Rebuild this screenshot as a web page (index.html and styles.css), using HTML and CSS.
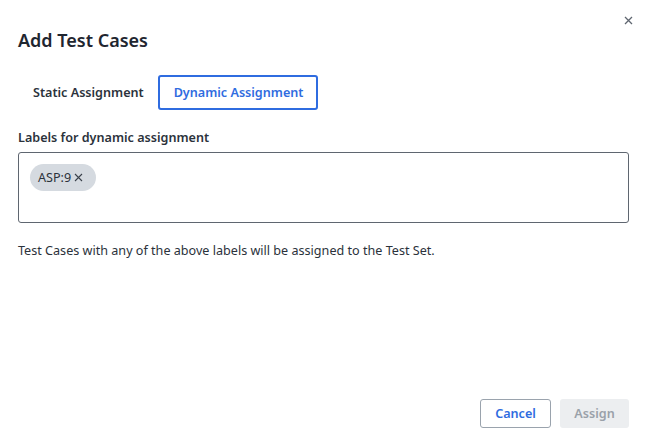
FILE: index.html
```html
<!DOCTYPE html>
<html>
<head>
<meta charset="utf-8">
<link rel="stylesheet" href="styles.css">
</head>
<body>
<div class="dialog">
  <button class="close" aria-label="Close">
    <svg width="9" height="9" viewBox="0 0 9 9"><path d="M1 1L8 8M8 1L1 8" stroke="#5f6670" stroke-width="1.3" fill="none"/></svg>
  </button>
  <h1 class="title">Add Test Cases</h1>
  <div class="tabs">
    <div class="tab">Static Assignment</div>
    <div class="tab active">Dynamic Assignment</div>
  </div>
  <div class="field-label">Labels for dynamic assignment</div>
  <div class="input">
    <span class="chip">ASP:9<svg class="chip-x" width="9" height="9" viewBox="0 0 9 9"><path d="M1 1L8 8M8 1L1 8" stroke="#3a414a" stroke-width="1.1" fill="none"/></svg></span>
  </div>
  <p class="help">Test Cases with any of the above labels will be assigned to the Test Set.</p>
  <div class="spacer"></div>
  <div class="footer">
    <button class="btn cancel">Cancel</button>
    <button class="btn assign">Assign</button>
  </div>
</div>
</body>
</html>
```
FILE: styles.css
```css
html, body {
  margin: 0;
  padding: 0;
  background: #ffffff;
}
body {
  font-family: "Noto Sans", "Open Sans", sans-serif;
  color: #1f2937;
}
.dialog {
  position: relative;
  width: 645px;
  height: 443px;
  box-sizing: border-box;
  padding: 28px 16px 15px 18px;
  display: flex;
  flex-direction: column;
}
.close {
  position: absolute;
  top: 13px;
  right: 10px;
  width: 14px;
  height: 14px;
  padding: 0;
  border: none;
  background: none;
  display: flex;
  align-items: center;
  justify-content: center;
}
.title {
  margin: 0;
  font-size: 18px;
  font-weight: 600;
  line-height: 24px;
  color: #1f2630;
}
.tabs {
  display: flex;
  margin-top: 23px;
}
.tab {
  height: 35px;
  box-sizing: border-box;
  padding: 0 14px 0 15px;
  display: flex;
  align-items: center;
  font-size: 12.6px;
  font-weight: 600;
  color: #2b323b;
}
.tab.active {
  border: 2px solid #2f6ce0;
  border-radius: 3px;
  color: #2f6ce0;
  padding: 0 13px 0 14px;
}
.field-label {
  margin-top: 19px;
  font-size: 12.6px;
  font-weight: 600;
  line-height: 18px;
  color: #2b323b;
}
.input {
  margin-top: 5px;
  height: 71px;
  box-sizing: border-box;
  border: 1px solid #5f6670;
  border-radius: 3px;
  padding: 11px 11px;
}
.chip {
  display: inline-flex;
  align-items: center;
  height: 27px;
  padding: 0 13px 0 8px;
  border-radius: 14px;
  background: #d5dae0;
  font-size: 12.6px;
  color: #2b323b;
}
.chip-x {
  margin-left: 3px;
}
.help {
  margin: 19px 0 0;
  font-size: 12.6px;
  line-height: 18px;
  color: #2b323b;
}
.spacer {
  flex: 1;
}
.footer {
  display: flex;
  justify-content: flex-end;
  gap: 9px;
}
.btn {
  height: 29px;
  box-sizing: border-box;
  border-radius: 3px;
  font-family: "Noto Sans", "Open Sans", sans-serif;
  font-size: 12.6px;
  font-weight: 600;
  padding: 0 12px;
}
.cancel {
  width: 71px;
  background: #ffffff;
  border: 1px solid #9aa3ad;
  color: #2f6ce0;
}
.assign {
  width: 69px;
  background: #eceef0;
  border: none;
  color: #9aa1a9;
}
```
